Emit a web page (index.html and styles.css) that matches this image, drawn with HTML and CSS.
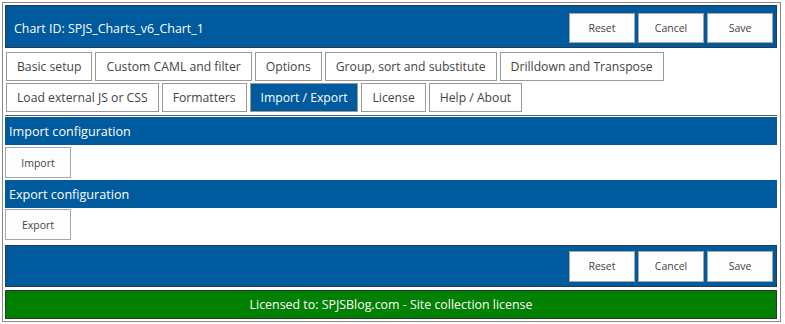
FILE: index.html
```html
<!DOCTYPE html>
<html>
<head>
<meta charset="utf-8">
<link rel="stylesheet" href="styles.css">
</head>
<body>
<div class="wrap">
  <div class="bar header">
    <span class="title">Chart ID: SPJS_Charts_v6_Chart_1</span>
    <div class="btns">
      <button class="btn">Reset</button>
      <button class="btn">Cancel</button>
      <button class="btn">Save</button>
    </div>
  </div>
  <div class="tabs">
    <div class="row">
      <div class="tab">Basic setup</div>
      <div class="tab">Custom CAML and filter</div>
      <div class="tab">Options</div>
      <div class="tab">Group, sort and substitute</div>
      <div class="tab">Drilldown and Transpose</div>
    </div>
    <div class="row">
      <div class="tab">Load external JS or CSS</div>
      <div class="tab">Formatters</div>
      <div class="tab active">Import / Export</div>
      <div class="tab">License</div>
      <div class="tab">Help / About</div>
    </div>
  </div>
  <div class="section">
    <div class="sechead">Import configuration</div>
    <button class="btn act">Import</button>
    <div class="sechead">Export configuration</div>
    <button class="btn act">Export</button>
  </div>
  <div class="bar footer">
    <div class="btns">
      <button class="btn">Reset</button>
      <button class="btn">Cancel</button>
      <button class="btn">Save</button>
    </div>
  </div>
  <div class="license">Licensed to: SPJSBlog.com - Site collection license</div>
</div>
</body>
</html>
```
FILE: styles.css
```css
* { box-sizing: border-box; }
body {
  margin: 0;
  font-family: "Open Sans", "Noto Sans", sans-serif;
  background: #fff;
}
.wrap {
  margin: 2px 0 0 2px;
  width: 779px;
  height: 320px;
  border: 1px solid #888;
  padding: 2px 3px 1px 2px;
}
.bar {
  background: #005a9e;
  border: 1px solid #2b3a4a;
  display: flex;
  align-items: center;
}
.header {
  height: 43px;
  padding: 7px 3px 4px 8px;
}
.title {
  color: #fff;
  font-size: 12.4px;
  flex: 1;
}
.btns {
  display: flex;
  gap: 3px;
  margin-left: auto;
}
.btn {
  width: 66px;
  height: 30px;
  background: #fdfdfd;
  border: 1px solid #a6a6a6;
  font-family: "Open Sans", "Noto Sans", sans-serif;
  font-size: 10.5px;
  color: #444;
  padding: 0;
}
.tabs {
  padding: 4px 0 3px 1px;
  border-bottom: 1px solid #555;
}
.row {
  display: flex;
  gap: 3px;
  margin-bottom: 2px;
}
.row:last-child { margin-bottom: 0; }
.tab {
  height: 29px;
  border: 1px solid #999;
  padding: 0 10px;
  font-size: 12.2px;
  color: #444;
  display: flex;
  align-items: center;
  white-space: nowrap;
}
.tab.active {
  background: #005a9e;
  color: #fff;
}
.section {
  margin-top: 1px;
}
.sechead {
  background: #005a9e;
  color: #fff;
  font-size: 12.6px;
  height: 28px;
  padding: 0 4px;
  display: flex;
  align-items: center;
}
.btn.act {
  display: block;
  height: 31px;
  margin: 2px 0 2px 0;
}
.btn.act:last-child {
  margin: 1px 0 0 0;
}
.footer {
  height: 42px;
  margin-top: 5px;
  padding: 0 3px 0 8px;
}
.footer .btn {
  height: 31px;
}
.license {
  margin-top: 3px;
  height: 29px;
  background: #008000;
  border: 1px solid #2b3a2b;
  color: #fff;
  font-size: 12.4px;
  display: flex;
  align-items: center;
  justify-content: center;
}
```
